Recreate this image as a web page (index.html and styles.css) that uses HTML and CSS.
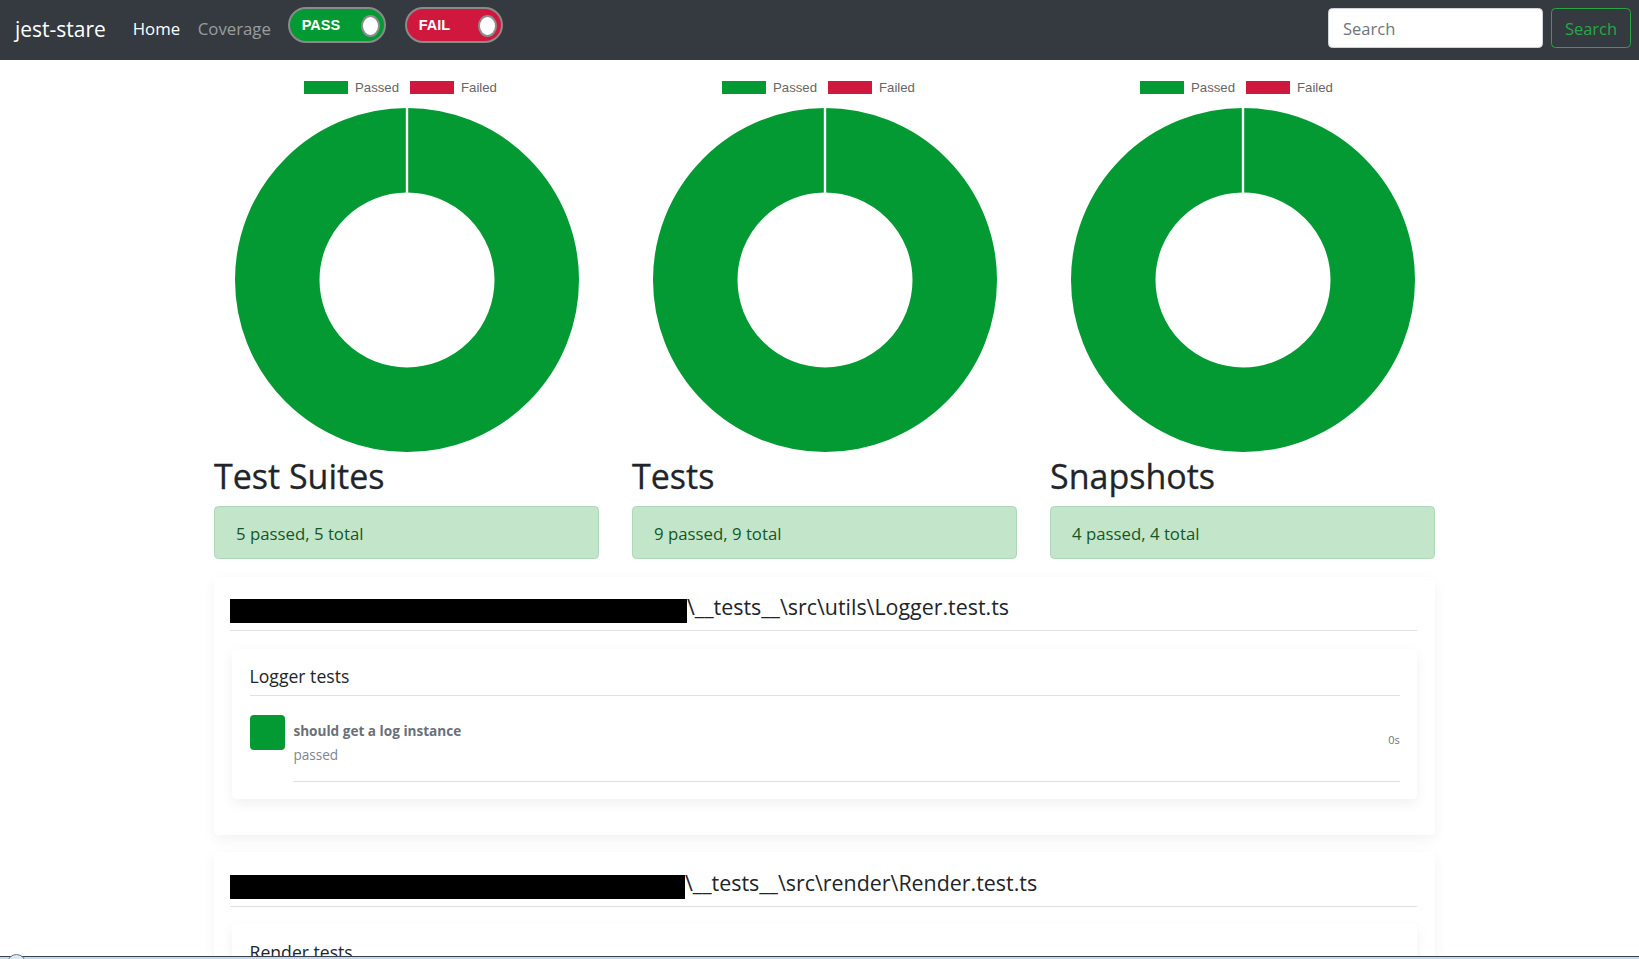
FILE: index.html
```html
<!DOCTYPE html>
<html lang="en">
<head>
<meta charset="utf-8">
<title>jest-stare</title>
<link rel="stylesheet" href="styles.css">
</head>
<body>
<nav class="navbar">
  <a class="brand" href="#">jest-stare</a>
  <a class="nav-link active" href="#">Home</a>
  <a class="nav-link muted" href="#">Coverage</a>
  <div class="toggle pass"><span class="toggle-label">PASS</span><span class="knob"></span></div>
  <div class="toggle fail"><span class="toggle-label">FAIL</span><span class="knob"></span></div>
  <div class="spacer"></div>
  <form class="search-form">
    <input class="search-input" type="text" placeholder="Search">
    <button class="search-btn" type="button">Search</button>
  </form>
</nav>

<main class="page">
  <div class="container">
    <div class="stats">
      <section class="stat">
        <div class="legend"><span class="lbox lpass"></span><span class="ltext">Passed</span><span class="lbox lfail"></span><span class="ltext">Failed</span></div>
        <svg class="donut" width="344" height="344" viewBox="0 0 344 344"><circle cx="172" cy="172" r="129.75" fill="none" stroke="#039a34" stroke-width="84.5"/><line x1="172" y1="0" x2="172" y2="85" stroke="#fff" stroke-width="2.4"/></svg>
        <h2 class="stat-title">Test Suites</h2>
        <div class="alert">5 passed, 5 total</div>
      </section>
      <section class="stat">
        <div class="legend"><span class="lbox lpass"></span><span class="ltext">Passed</span><span class="lbox lfail"></span><span class="ltext">Failed</span></div>
        <svg class="donut" width="344" height="344" viewBox="0 0 344 344"><circle cx="172" cy="172" r="129.75" fill="none" stroke="#039a34" stroke-width="84.5"/><line x1="172" y1="0" x2="172" y2="85" stroke="#fff" stroke-width="2.4"/></svg>
        <h2 class="stat-title">Tests</h2>
        <div class="alert">9 passed, 9 total</div>
      </section>
      <section class="stat">
        <div class="legend"><span class="lbox lpass"></span><span class="ltext">Passed</span><span class="lbox lfail"></span><span class="ltext">Failed</span></div>
        <svg class="donut" width="344" height="344" viewBox="0 0 344 344"><circle cx="172" cy="172" r="129.75" fill="none" stroke="#039a34" stroke-width="84.5"/><line x1="172" y1="0" x2="172" y2="85" stroke="#fff" stroke-width="2.4"/></svg>
        <h2 class="stat-title">Snapshots</h2>
        <div class="alert">4 passed, 4 total</div>
      </section>
    </div>

    <div class="file-card">
      <h5 class="file-title"><span class="redact r1"></span>\__tests__\src\utils\Logger.test.ts</h5>
      <div class="suite-card">
        <h6 class="suite-title">Logger tests</h6>
        <div class="media">
          <span class="status-box"></span>
          <div class="media-body">
            <div class="test-text">
              <strong class="test-name">should get a log instance</strong>
              <span class="test-status">passed</span>
            </div>
            <small class="duration">0s</small>
          </div>
        </div>
      </div>
    </div>

    <div class="file-card">
      <h5 class="file-title"><span class="redact r2"></span>\__tests__\src\render\Render.test.ts</h5>
      <div class="suite-card">
        <h6 class="suite-title">Render tests</h6>
        <div class="media">
          <span class="status-box"></span>
          <div class="media-body">
            <div class="test-text">
              <strong class="test-name">should render</strong>
              <span class="test-status">passed</span>
            </div>
            <small class="duration">0s</small>
          </div>
        </div>
      </div>
    </div>
  </div>
</main>

<div class="taskbar"><span class="orb"></span></div>
</body>
</html>
```

FILE: styles.css
```css
* { box-sizing: border-box; }

html, body {
  margin: 0;
  padding: 0;
  background: #fff;
  font-family: "Open Sans", "Noto Sans", sans-serif;
  color: #212529;
}

/* ---------- navbar ---------- */
.navbar {
  height: 60px;
  background: #343a40;
  display: flex;
  align-items: flex-start;
  padding: 0 8px 0 15px;
}

.brand {
  color: #fff;
  text-decoration: none;
  font-size: 21px;
  line-height: 33px;
  margin-top: 13px;
  margin-right: 18px;
}

.nav-link {
  text-decoration: none;
  font-size: 16.8px;
  line-height: 26px;
  margin-top: 16px;
  padding: 0 8.8px;
}
.nav-link.active { color: #fff; }
.nav-link.muted { color: rgba(255, 255, 255, 0.5); }

.toggle {
  width: 98px;
  height: 36px;
  margin-top: 7px;
  margin-left: 8px;
  border: 2px solid #8a8a8a;
  border-radius: 18px;
  display: flex;
  align-items: center;
  justify-content: space-between;
  padding: 0 4px 0 12px;
}
.toggle + .toggle { margin-left: 19px; }
.toggle.pass { background: #039a34; }
.toggle.fail { background: #d0183f; }

.toggle-label {
  color: #fff;
  font-family: "Liberation Sans", Arial, sans-serif;
  font-weight: bold;
  font-size: 14.5px;
  line-height: 18px;
  margin-top: -1px;
}

.knob {
  width: 19px;
  height: 22px;
  background: #fff;
  border: 2px solid #8d8d8d;
  border-radius: 9.5px / 11px;
  margin-top: 1px;
}

.spacer { flex: 1; }

.search-form {
  display: flex;
  margin-top: 8px;
}

.search-input {
  width: 215px;
  height: 40px;
  border: 1px solid #ced4da;
  border-radius: 4.4px;
  padding: 0 14px;
  font-family: "Open Sans", sans-serif;
  font-size: 16.5px;
  color: #495057;
  background: #fff;
  outline: none;
}
.search-input::placeholder { color: #6c757d; }

.search-btn {
  width: 80px;
  height: 40px;
  margin-left: 8px;
  border: 1px solid #28a745;
  border-radius: 4.4px;
  background: transparent;
  color: #28a745;
  font-family: "Open Sans", sans-serif;
  font-size: 16.5px;
  padding: 0;
}

/* ---------- page ---------- */
.page {
  padding-left: 10px;
}

.container {
  width: 1221px;
  margin: 0 auto;
}

.stats {
  display: grid;
  grid-template-columns: repeat(3, 385px);
  column-gap: 33px;
}

.stat {
  display: flex;
  flex-direction: column;
  align-items: stretch;
  padding-top: 21px;
}

.legend {
  display: flex;
  justify-content: center;
  align-items: center;
  height: 13px;
  font-family: "Liberation Sans", Arial, sans-serif;
  font-size: 13.2px;
  color: #666;
  padding-right: 12px;
}
.lbox {
  width: 44px;
  height: 13px;
  margin-right: 7px;
}
.lpass { background: #039a34; }
.lfail { background: #d0183f; margin-left: 11px; }
.ltext { line-height: 13px; }

.donut {
  display: block;
  margin: 14px auto 3px;
}

.stat-title {
  margin: 0 0 8.8px;
  font-size: 34px;
  font-weight: 500;
  line-height: 42px;
  color: #212529;
  -webkit-text-stroke: 0.3px #212529;
}

.alert {
  height: 53px;
  background: #c3e6cb;
  border: 1px solid #add7b7;
  border-radius: 4.4px;
  color: #155724;
  font-size: 16.8px;
  line-height: 26px;
  padding: 14px 21px 10px;
}

/* ---------- file cards ---------- */
.file-card {
  margin: 18px 0 17.6px;
  padding: 17.6px 17.6px 17.6px 16px;
  background: #fff;
  border-radius: 4.4px;
  box-shadow: 0 4.4px 13.2px rgba(0, 0, 0, 0.05);
}
.file-card + .file-card { margin-top: 0; }

.file-title {
  margin: 0;
  padding-bottom: 8.8px;
  border-bottom: 1px solid #dee2e6;
  font-size: 21.4px;
  font-weight: 400;
  line-height: 26.4px;
  color: #212529;
  white-space: nowrap;
}

.redact {
  display: inline-block;
  height: 24px;
  background: #000;
  vertical-align: text-bottom;
  margin-bottom: -2px;
}
.r1 { width: 457px; }
.r2 { width: 455px; }

.suite-card {
  margin: 17.6px 0 17.6px 2px;
  padding: 17.6px;
  background: #fff;
  border-radius: 4.4px;
  box-shadow: 0 4.4px 13.2px rgba(0, 0, 0, 0.06);
}

.suite-title {
  margin: 0;
  padding-bottom: 7.5px;
  border-bottom: 1px solid #dee2e6;
  font-size: 17.6px;
  font-weight: 500;
  line-height: 21px;
  color: #212529;
}

.media {
  display: flex;
  align-items: flex-start;
  padding-top: 19px;
}

.status-box {
  flex: none;
  width: 35px;
  height: 35px;
  border-radius: 4px;
  background: #039a34;
  margin-right: 8.8px;
}

.media-body {
  flex: 1;
  display: flex;
  align-items: center;
  justify-content: space-between;
  padding: 4.6px 0 13.4px;
  border-bottom: 1px solid #dee2e6;
}

.test-text {
  display: flex;
  flex-direction: column;
  color: #6c757d;
  font-size: 13.6px;
  line-height: 24px;
}
.test-name {
  font-weight: 700;
  color: #6a7078;
}
.test-status { color: #7c8594; }

.duration {
  font-size: 11px;
  color: #6c757d;
  margin-bottom: 8px;
}

/* ---------- taskbar sliver ---------- */
.taskbar {
  position: fixed;
  left: 0;
  right: 0;
  bottom: 0;
  height: 3px;
  background: #c6d9ec;
  border-top: 1px solid #3d4248;
}
.orb {
  position: absolute;
  left: 7px;
  top: -3px;
  width: 19px;
  height: 19px;
  border-radius: 50%;
  border: 1px solid #5d7894;
  background: #dfe9f3;
}
```
